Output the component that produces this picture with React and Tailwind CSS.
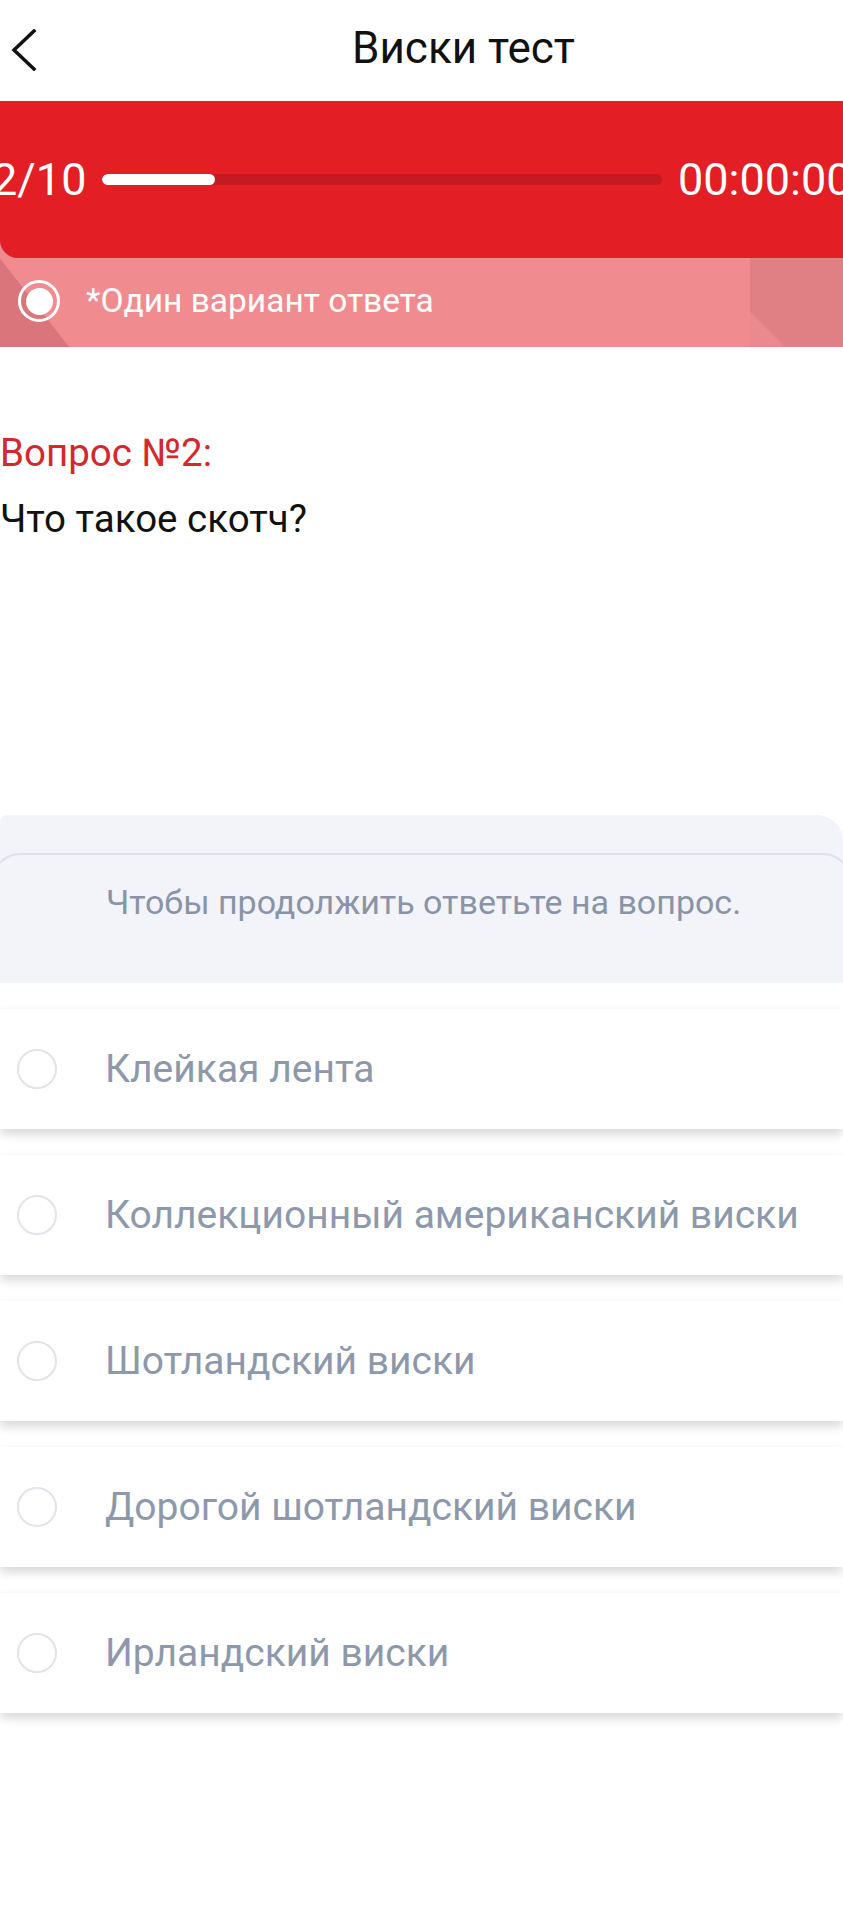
import React from "react";

const options = [
  "Клейкая лента",
  "Коллекционный американский виски",
  "Шотландский виски",
  "Дорогой шотландский виски",
  "Ирландский виски",
];

export default function App() {
  return (
    <div className="w-[843px] min-h-[1920px] bg-white overflow-hidden" style={{ fontFamily: "Roboto, 'Noto Sans', sans-serif" }}>
      {/* Header */}
      <div className="relative h-[101px] flex items-center">
        <svg className="absolute left-[10px] top-[29px]" width="28" height="42" viewBox="0 0 28 42" fill="none">
          <path d="M24 2 L4 21 L24 40" stroke="#111" strokeWidth="3.5" strokeLinecap="square" strokeLinejoin="miter" />
        </svg>
        <div className="w-full pl-[84px] pb-[5px] text-center text-[44px] leading-none text-[#111]">Виски тест</div>
      </div>

      {/* Red progress band */}
      <div className="relative bg-[#f08c90]">
        <div className="relative z-10 h-[157px] bg-[#e31e24] rounded-bl-[18px] flex items-center">
          <div className="ml-[-8px] w-[96px] shrink-0 text-white text-[45px] leading-none">2/10</div>
          <div className="ml-[14px] w-[560px] shrink-0 h-[11px] rounded-full bg-[#c41b22] overflow-hidden">
            <div className="h-full w-[113px] rounded-full bg-white" />
          </div>
          <div className="ml-[16px] shrink-0 text-white text-[45px] leading-none whitespace-nowrap">00:00:00</div>
        </div>
        <div
          className="relative h-[89px] flex items-center"
          style={{
            background:
              "linear-gradient(52deg, #da757b 0, #da757b 54px, transparent 55px), linear-gradient(to right, transparent 0, transparent 750px, #e07f84 750px)",
          }}
        >
          <div className="absolute right-[58px] bottom-0 w-[35px] h-[35px] bg-[#ea8a8e]" style={{ clipPath: "polygon(0 0, 100% 100%, 0 100%)" }} />
          <div className="relative ml-[18px] mt-[-3px] w-[42px] h-[42px] rounded-full border-[3px] border-white flex items-center justify-center">
            <div className="w-[27px] h-[27px] rounded-full bg-white" />
          </div>
          <div className="relative ml-[26px] mt-[-4px] text-white text-[33.5px] leading-none">*Один вариант ответа</div>
        </div>
      </div>

      {/* Question */}
      <div className="pt-[87px] h-[468px]">
        <div className="text-[#d3282e] text-[38.5px] leading-none">Вопрос №2:</div>
        <div className="mt-[27px] text-[#111] text-[38.5px] leading-none">Что такое скотч?</div>
      </div>

      {/* Hint box */}
      <div className="h-[168px] bg-[#f3f4f9] rounded-tr-[26px] rounded-tl-[8px] overflow-hidden pt-[38px]">
        <div className="mx-[-8px] h-[160px] rounded-[28px] border-2 border-[#dfe2e9] pt-[30px] pl-[112px]">
          <div className="text-[#8a94a6] text-[34px] leading-none">Чтобы продолжить ответьте на вопрос.</div>
        </div>
      </div>

      {/* Options */}
      <div className="pt-[26px] flex flex-col gap-[26px]">
        {options.map((o) => (
          <div key={o} className="h-[120px] bg-white flex items-center shadow-[0_5px_10px_rgba(0,0,0,0.16)]">
            <div className="ml-[17px] w-[40px] h-[40px] rounded-full border-2 border-[#e1e4ea]" />
            <div className="ml-[48px] text-[#8d99ab] text-[39px] leading-none">{o}</div>
          </div>
        ))}
      </div>
    </div>
  );
}
